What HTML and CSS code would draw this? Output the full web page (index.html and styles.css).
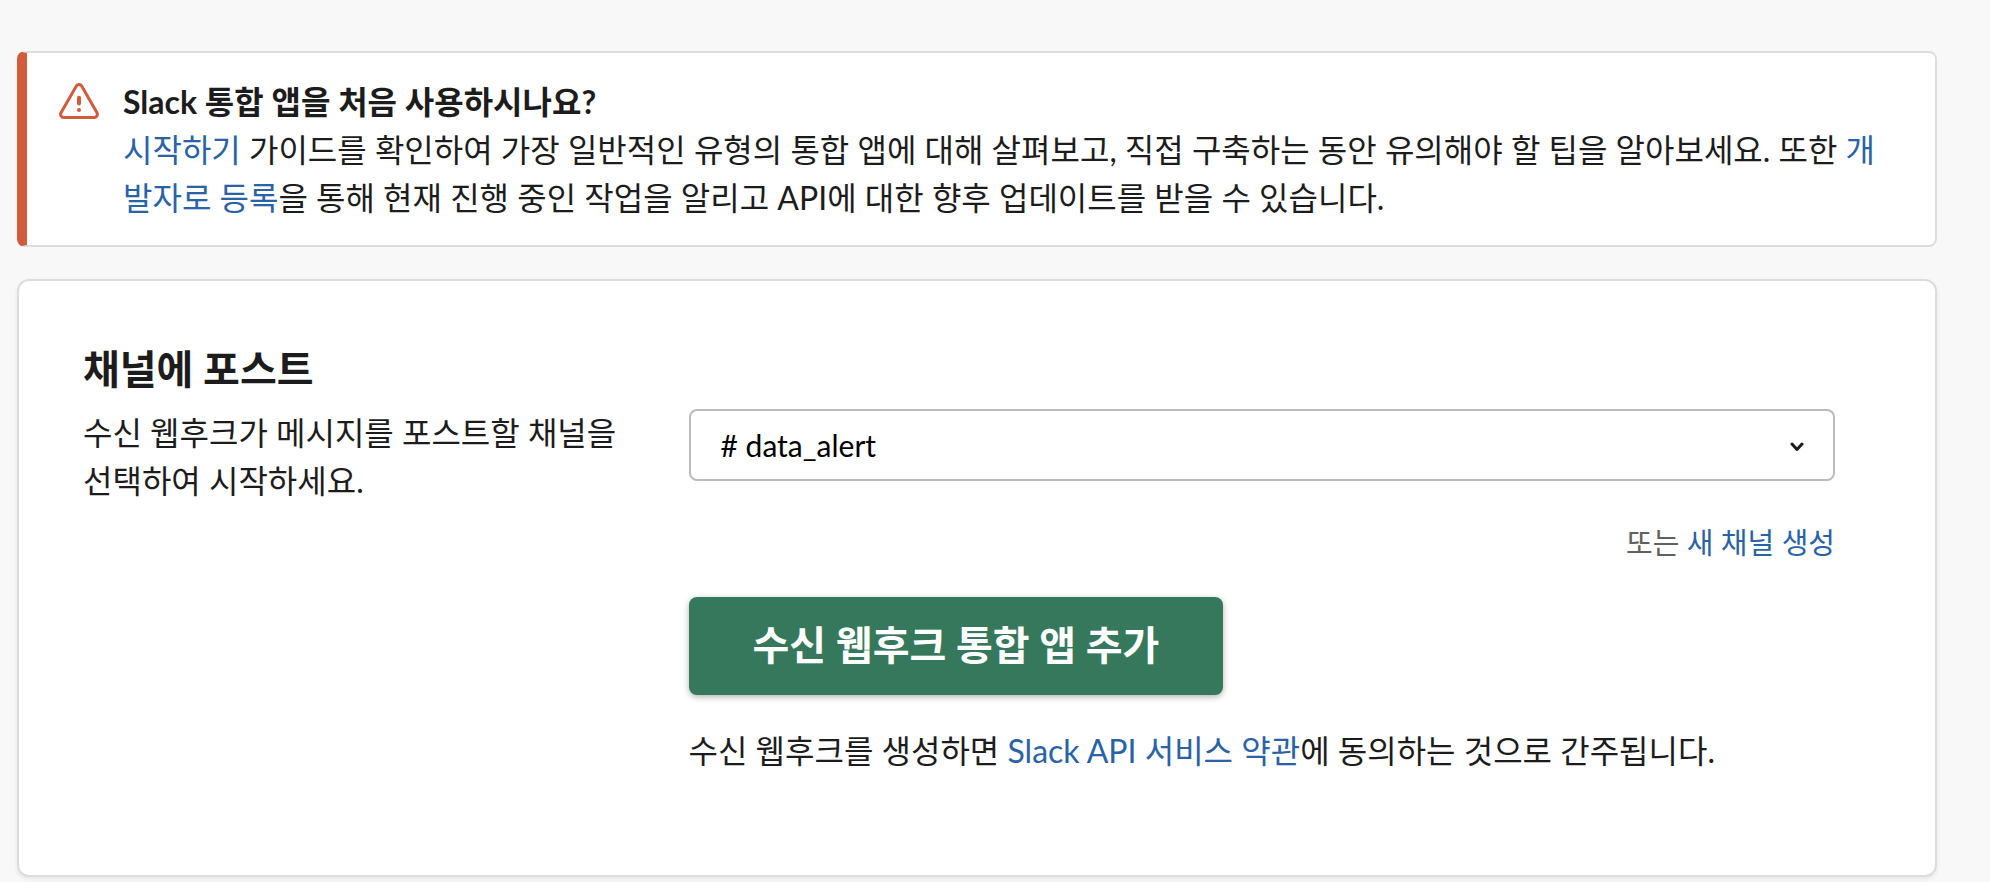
FILE: index.html
```
<!DOCTYPE html>
<html lang="ko">
<head>
    <meta charset="UTF-8">
    <meta name="viewport" content="width=device-width, initial-scale=1.0">
    <title>수신 웹후크</title>
    <link rel="stylesheet" href="styles.css">
</head>
<body>

    <main class="page">
        <section class="alert">
            <svg class="alert-icon" viewBox="0 0 40 36" aria-hidden="true">
                <path d="M17.2 3.2 a3.2 3.2 0 0 1 5.6 0 L38 29.8 a3.2 3.2 0 0 1 -2.8 4.7 H4.8 A3.2 3.2 0 0 1 2 29.8 Z" fill="none" stroke="currentColor" stroke-width="3" stroke-linejoin="round"/>
                <path d="M20 14.8 v5.6" stroke="currentColor" stroke-width="4" stroke-linecap="round"/>
                <circle cx="20" cy="27" r="2" fill="currentColor"/>
            </svg>
            <div class="alert-text">
                <strong>Slack 통합 앱을 처음 사용하시나요?</strong>
                <p><a href="#">시작하기</a> 가이드를 확인하여 가장 일반적인 유형의 통합 앱에 대해 살펴보고, 직접 구축하는 동안 유의해야 할 팁을 알아보세요. 또한 <a href="#">개발자로 등록</a>을 통해 현재 진행 중인 작업을 알리고 API에 대한 향후 업데이트를 받을 수 있습니다.</p>
            </div>
        </section>

        <section class="card">
            <h2>채널에 포스트</h2>
            <form class="channel-form">
                <label for="channel">수신 웹후크가 메시지를 포스트할 채널을 선택하여 시작하세요.</label>
                <div class="channel-fields">
                    <div class="select-wrap">
                        <select id="channel" name="channel">
                            <option># data_alert</option>
                        </select>
                        <svg class="chevron" viewBox="0 0 14 10" aria-hidden="true">
                            <path d="M2 2 L7 7.5 L12 2" fill="none" stroke="currentColor" stroke-width="3" stroke-linecap="round" stroke-linejoin="round"/>
                        </svg>
                    </div>
                    <p class="new-channel">또는 <a href="#">새 채널 생성</a></p>
                    <button type="button" class="btn-add">수신 웹후크 통합 앱 추가</button>
                    <p>수신 웹후크를 생성하면 <a href="#">Slack API 서비스 약관</a>에 동의하는 것으로 간주됩니다.</p>
                </div>
            </form>
        </section>
    </main>

</body>
</html>
```

FILE: styles.css
```
* {
    box-sizing: border-box;
}

body {
    margin: 0;
    font-family: Lato, "Noto Sans CJK KR", sans-serif;
    font-size: 32px;
    line-height: 48px;
    background-color: #f8f8f8;
    color: #1d1c1d;
}

p, h2 {
    margin: 0;
}

a {
    color: #2a62a6;
    text-decoration: none;
}

a:hover {
    text-decoration: underline;
}

.page {
    padding: 51px 53px 5px 17px;
}

.alert {
    display: flex;
    gap: 24px;
    padding: 25px 48px 23px 32px;
    margin-bottom: 32px;
    background-color: #fff;
    border: 2px solid #ddd;
    border-left: 10px solid #d15b3b; /* Warning stripe */
    border-radius: 8px;
}

.alert-icon {
    flex: none;
    width: 40px;
    height: 36px;
    margin-top: 5px;
    color: #d15b3b;
}

.alert-text {
    flex: 1;
}

.alert strong {
    display: block;
}

.card {
    padding: 64px 100px 100px 64px;
    background-color: #fff;
    border: 2px solid #ddd;
    border-radius: 12px;
    box-shadow: 0 2px 4px rgba(0, 0, 0, 0.08);
}

.card h2 {
    margin-bottom: 16px;
    font-size: 40px;
    line-height: 48px;
}

.channel-form {
    display: grid;
    grid-template-columns: 8fr 17fr;
    gap: 66px;
}

.select-wrap {
    position: relative;
}

select {
    display: block;
    width: 100%;
    height: 72px;
    padding: 0 64px 0 30px;
    font: inherit;
    font-size: 30px;
    color: #000;
    background-color: #fff;
    border: 2px solid #bbb;
    border-radius: 8px;
    appearance: none;
}

/* Arrow drawn over the select */
.chevron {
    position: absolute;
    right: 31px;
    top: 33px;
    width: 14px;
    height: 10px;
    pointer-events: none;
}

.new-channel {
    margin: 40px 0 32px;
    font-size: 29px;
    line-height: 44px;
    text-align: right;
    color: #616061;
}

.btn-add {
    display: block;
    margin-bottom: 32px;
    padding: 24px 64px 26px;
    font: inherit;
    font-size: 40px;
    font-weight: bold;
    line-height: 48px;
    color: #fff;
    background-color: #36785c; /* Green button */
    border: none;
    border-radius: 8px;
    box-shadow: 0 2px 6px rgba(0, 0, 0, 0.3);
    cursor: pointer;
}
```
